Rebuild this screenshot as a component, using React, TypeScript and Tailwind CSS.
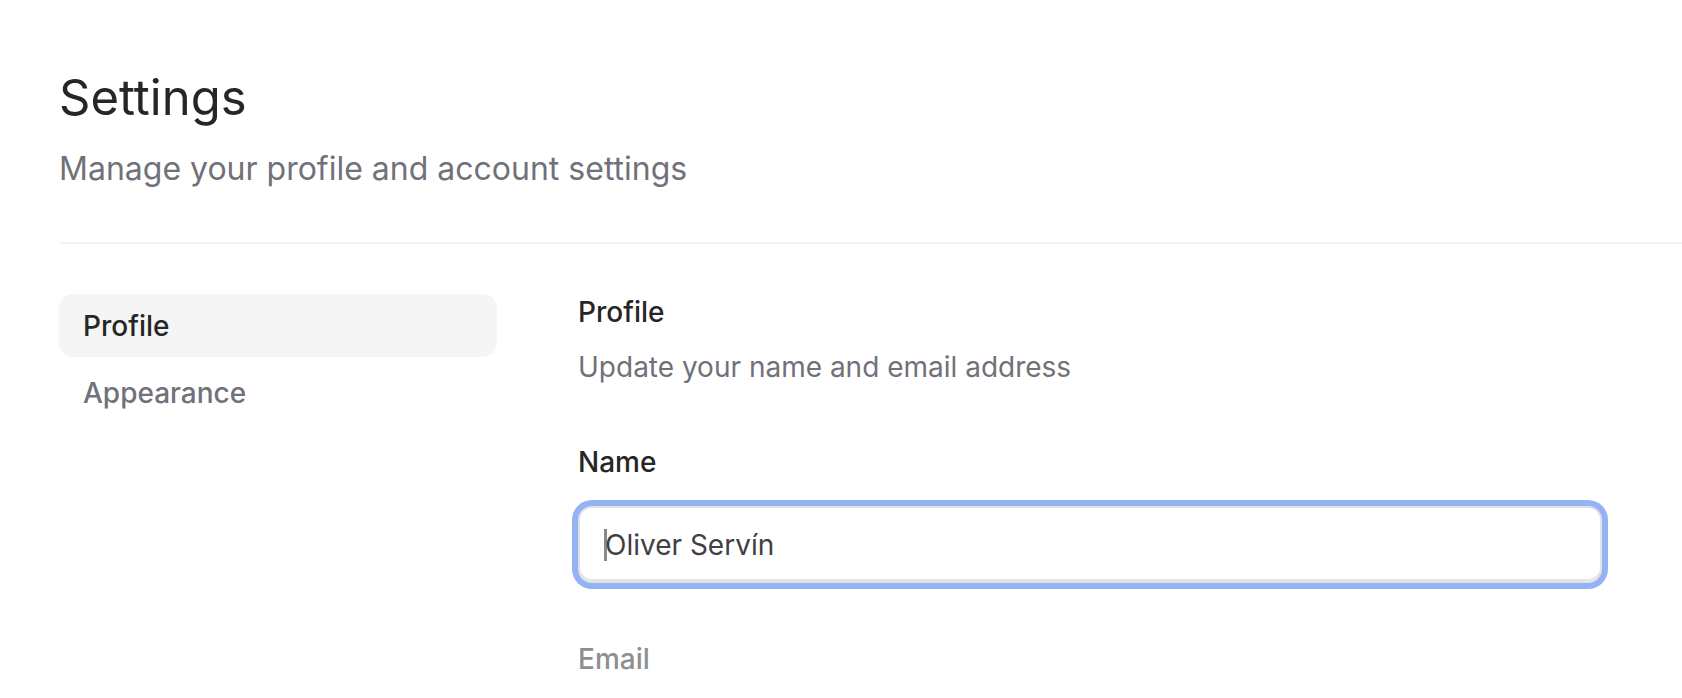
import React from 'react';

const navItems = [
    { label: 'Profile', active: true },
    { label: 'Appearance', active: false },
];

const App: React.FC = () => {
    return (
        <div className="min-h-screen bg-white font-['Inter','Liberation_Sans',sans-serif] text-[#262626]">
            <div className="pl-[59px] pt-[71px]">
                <h1 className="text-[49px] leading-[53px] font-normal text-[#262626]">Settings</h1>
                <p className="mt-[27px] text-[32px] leading-[36px] text-[#71717a]">
                    Manage your profile and account settings
                </p>
                <div className="mt-[55px] h-[2px] bg-[#f3f3f4]" />

                <div className="mt-[50px] flex gap-[81px]">
                    {/* Side nav */}
                    <nav className="flex w-[438px] shrink-0 flex-col gap-[4px]">
                        {navItems.map((item) => (
                            <div
                                key={item.label}
                                className={`flex h-[63px] items-center rounded-[14px] px-[24px] text-[28px] leading-[36px] font-medium ${
                                    item.active ? 'bg-[#f5f5f5] text-[#262626]' : 'text-[#71717a]'
                                }`}
                            >
                                {item.label}
                            </div>
                        ))}
                    </nav>

                    {/* Content */}
                    <section className="w-[1024px] shrink-0">
                        <h2 className="text-[28px] leading-[36px] font-medium text-[#262626]">Profile</h2>
                        <p className="mt-[19px] text-[28px] leading-[36px] text-[#71717a]">
                            Update your name and email address
                        </p>

                        <label className="mt-[59px] block text-[28px] leading-[36px] font-medium text-[#262626]">
                            Name
                        </label>
                        <div className="mt-[26px] flex h-[77px] items-center rounded-[14px] border-2 border-[#e2e2e4] bg-white px-[24px] ring-[6px] ring-[#94b3f4] shadow-[inset_0_-2px_0_#e4e4e7]">
                            <span className="-mr-[2px] h-[32px] w-[3px] bg-[#8a8a8a]" />
                            <span className="text-[28px] leading-[36px] text-[#3f3f46]">Oliver Servín</span>
                        </div>

                        <label className="mt-[58px] block text-[28px] leading-[36px] font-medium text-[#8f8f8f]">
                            Email
                        </label>
                    </section>
                </div>
            </div>
        </div>
    );
};

export default App;
